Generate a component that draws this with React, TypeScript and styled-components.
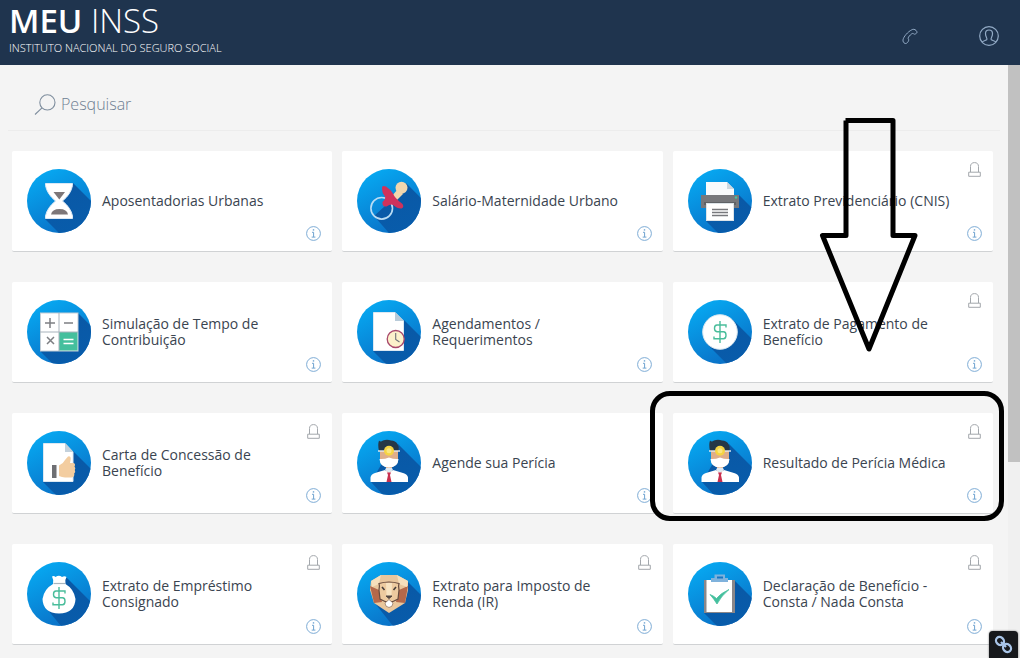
import React from "react";
import styled, { createGlobalStyle } from "styled-components";

const GlobalStyle = createGlobalStyle`
  *, *::before, *::after { box-sizing: border-box; }
  body {
    margin: 0;
    background: #f4f4f4;
    font-family: "Open Sans", "Liberation Sans", sans-serif;
    color: #3a4450;
  }
`;

const Page = styled.div`
  display: flex;
  flex-direction: column;
  min-height: 100vh;
`;

const Header = styled.header`
  display: flex;
  justify-content: space-between;
  align-items: flex-start;
  height: 65px;
  padding: 0 20px 0 9px;
  background: #1f344e;
  color: #ffffff;
`;

const Brand = styled.a`
  color: inherit;
  text-decoration: none;
`;

const BrandName = styled.span`
  display: block;
  font-size: 33px;
  line-height: 42px;
  font-weight: 300;

  strong { font-weight: 600; }
`;

const BrandTagline = styled.span`
  display: block;
  font-size: 11px;
  line-height: 12px;
  font-weight: 300;
`;

const HeaderActions = styled.nav`
  display: flex;
  gap: 57px;
  padding-top: 26px;
`;

const IconButton = styled.button`
  display: flex;
  justify-content: center;
  align-items: center;
  padding: 0;
  border: 0;
  background: none;
  cursor: pointer;
`;

const HeaderButton = styled(IconButton)`
  width: 22px;
  height: 20px;
  color: #93abc6;
`;

const Body = styled.div`
  display: flex;
  flex: 1;
`;

const Main = styled.main`
  flex: 1;
  min-width: 0;
  padding: 0 8px 13px;
`;

const ScrollTrack = styled.div`
  width: 12px;
  background: #f0f0f0;
`;

const ScrollThumb = styled.div`
  height: 67%;
  background: #c1c1c1;
`;

const SearchBar = styled.label`
  display: flex;
  align-items: center;
  gap: 5px;
  height: 66px;
  padding: 13px 26px 0;
  border-bottom: 1px solid #ececec;
  color: #7f8e9e;
`;

const SearchInput = styled.input`
  flex: 1;
  min-width: 0;
  padding: 0;
  border: 0;
  outline: 0;
  background: none;
  font-family: inherit;
  font-size: 16px;
  line-height: 24px;
  font-weight: 300;
  color: #3a4450;

  &::placeholder { color: #6f8093; opacity: 1; }
`;

const CardGrid = styled.div`
  display: grid;
  grid-template-columns: repeat(3, 1fr);
  gap: 30px 10px;
  padding: 20px 7px 0 4px;
`;

const Card = styled.article`
  position: relative;
  display: flex;
  align-items: center;
  height: 101px;
  padding-left: 15px;
  background: #ffffff;
  border-bottom: 1px solid #d0d2d4;
  border-radius: 2px;
`;

const CardLink = styled.a`
  display: flex;
  flex: 1;
  align-items: center;
  gap: 11px;
  color: inherit;
  text-decoration: none;
`;

const CardTitle = styled.span`
  flex: 1;
  padding-right: 12px;
  font-size: 14px;
  line-height: 16px;
`;

const CardSide = styled.div`
  display: flex;
  flex-direction: column;
  align-items: center;
  align-self: stretch;
  width: 15px;
  margin-right: 11px;
  padding: 11px 0 10px;
`;

const InfoButton = styled(IconButton)`
  margin-top: auto;
  color: #6fa3d0;
`;

const Highlight = styled.div`
  position: absolute;
  z-index: 2;
  top: -22px;
  right: -11px;
  bottom: -8px;
  left: -23px;
  border: 5px solid #000000;
  border-radius: 20px;
  pointer-events: none;
`;

const Arrow = styled.svg`
  position: absolute;
  z-index: 2;
  top: -296px;
  right: 75px;
  pointer-events: none;
`;

const LinkBadge = styled(IconButton)`
  position: fixed;
  z-index: 3;
  right: 2px;
  bottom: 0;
  width: 29px;
  height: 27px;
  border-radius: 4px 4px 0 0;
  background: #17191c;
  box-shadow: 0 0 2px #666666;
`;

const PhoneIcon = () => (
  <svg width="16" height="17" viewBox="0 0 16 17" fill="none" stroke="currentColor" strokeLinejoin="round">
    <path d="M9.800 1.800C11 1 12.700 1.100 14 2.400C15 3.400 15.300 4.500 14.600 5.100L13.300 6C12.600 6.400 11.900 6.200 11.400 5.600C10.700 5.100 9.800 5.600 8.300 7C6.900 8.400 5.900 9.800 6.200 10.600C6.900 11.500 6.900 12.500 6.100 13.700C5.300 15 4 15.900 2.900 15.400C1.500 14.800 .8 13.300 1 11.900C1.500 8.700 5.900 3.700 9.800 1.800Z" />
  </svg>
);

const UserIcon = () => (
  <svg width="20" height="20" viewBox="0 0 20 20" fill="none" stroke="currentColor" strokeWidth="1.2">
    <circle cx="10" cy="10" r="9.300" />
    <path d="M3 16.200C4 14.800 6.800 14.500 7.700 13.800C8.400 13.100 7.900 12.200 7.300 11C6.800 10 6.500 8.700 6.500 7.500C6.500 5.200 7.900 4 10 4S13.500 5.200 13.500 7.500C13.500 8.700 13.200 10 12.700 11C12.100 12.200 11.600 13.100 12.300 13.800C13.200 14.500 16 14.800 17 16.200" />
  </svg>
);

const SearchIcon = () => (
  <svg width="22" height="22" viewBox="0 0 22 22" fill="none" stroke="currentColor" strokeWidth="1.1">
    <circle cx="13.400" cy="9.400" r="7.600" />
    <path d="M8 14.800L1 21.500" />
  </svg>
);

const LockIcon = () => (
  <svg width="13" height="15" viewBox="0 0 13 15" fill="none" stroke="#a3a7ac" role="img" aria-label="Requer login">
    <path d="M2.500 10V4.500C2.500 2 4 .6 6.500 .6S10.500 2 10.500 4.500V10" />
    <path d="M.7 10.200H12.300V14.300H.7Z" />
  </svg>
);

const InfoIcon = () => (
  <svg width="15" height="15" viewBox="0 0 15 15" fill="none" stroke="currentColor">
    <circle cx="7.500" cy="7.500" r="6.900" strokeWidth=".9" />
    <path d="M6 6.300H7.600V11M5.700 11.100H9.400" />
    <path d="M6.800 3.900H8.200" strokeWidth="1.400" />
  </svg>
);

const ChainIcon = () => (
  <svg width="19" height="19" viewBox="0 0 19 19" fill="none" stroke="#a9c5e8" strokeWidth="2.300">
    <ellipse cx="6" cy="6" rx="4.300" ry="3.700" transform="rotate(45 6 6)" />
    <ellipse cx="13" cy="13" rx="4.300" ry="3.700" transform="rotate(45 13 13)" />
    <path d="M7 7L12 12" />
  </svg>
);

const Dollar = ({ y = 0 }: { y?: number }) => (
  <path
    d={`M32 ${21 + y}V${43 + y}M38 ${27.5 + y}V${25 + y}H29Q26.500 ${25 + y} 26.500 ${28.300 + y}T29 ${31.800 + y}H35.500Q38 ${31.800 + y} 38 ${35.300 + y}T35.500 ${38.800 + y}H26V${36.500 + y}`}
    fill="none"
    stroke="#49bd9b"
    strokeWidth="1.400"
  />
);

const Doctor = () => (
  <>
    <path d="M29 34H35V43H29Z" fill="#dba983" />
    <path d="M13.500 51V46.500Q14 43 18 42L28 39L32 42L36 39L46 42Q50.500 43 51 46.500V51Z" fill="#ffffff" />
    <path d="M28 39L32 42L36 39L35 37H29Z" fill="#dfe9f2" />
    <path d="M30 41.500H34L33 44L34.500 51H29.500L31 44Z" fill="#c9304f" />
    <path d="M23 17H41V28Q41 36 32 36Q23 36 23 28Z" fill="#dfae8a" />
    <path d="M22 20Q20.500 14 22 9.500Q23.500 11.500 26 9.500Q30 8 34 9.500Q38.500 9.500 40.500 13Q42.500 16 41.500 20Z" fill="#263746" />
    <path d="M21 20H43" stroke="#e8edf0" strokeWidth="1.400" />
    <path d="M22.500 28Q27 28.500 32 26.500Q37 28.500 41.500 28Q41 36.500 32 36.500Q23 36.500 22.500 28Z" fill="#ffffff" />
    <circle cx="32" cy="19.700" r="5" fill="#f6d443" />
    <circle cx="32" cy="19.700" r="2.500" fill="#fae680" />
  </>
);

const artwork = {
  hourglass: {
    shadow: "M46 14L64 32V64H32L18 50Z",
    drawing: (
      <>
        <path d="M18.500 14.500H45.500V16.500Q44 25 35.500 32Q44 39 45.500 47V49.500H18.500V47Q20 39 28.500 32Q20 25 18.500 16.500Z" fill="#ffffff" stroke="#d9e8f6" />
        <path d="M26.500 23H38L32.300 30.500Z" fill="#7d7779" />
        <path d="M24 45.500Q25 40 32.500 40T41 45.500Z" fill="#7d7779" />
      </>
    ),
  },
  pacifier: {
    shadow: "M49 14L64 29V64H32L17 47L28 37Z",
    drawing: (
      <>
        <circle cx="24.700" cy="39.300" r="10.800" fill="none" stroke="#b9dcf4" strokeWidth="1.600" />
        <path d="M34 28L41 20L46 25L38 33Z" fill="#f1d6ae" />
        <circle cx="44.500" cy="18.700" r="6" fill="#f1d6ae" />
        <path d="M29 17.500Q24.500 15.500 25 20Q25 24 28 27.500Q29 30 25.500 33Q25 38 29.500 37.500Q34 34.500 36 36Q41 40 44.500 39.500Q47.500 38 45.500 35Q37.500 29 36 24.500Q33 20 29 17.500Z" fill="#cf325c" />
      </>
    ),
  },
  printer: {
    shadow: "M51 26L64 39V64H30L18 52Z",
    drawing: (
      <>
        <path d="M18 13H39L46 20V28H18Z" fill="#f8fafc" />
        <path d="M39 13L46 20H39Z" fill="#cfd8df" />
        <rect x="13" y="26" width="38" height="13" fill="#77787c" />
        <rect x="16" y="33" width="32" height="3" fill="#5f6266" />
        <circle cx="48" cy="28.500" r="1.200" fill="#47c4a2" />
        <rect x="18.500" y="34.500" width="27" height="17" fill="#ffffff" stroke="#dde4e9" />
        <path d="M24 40.500H40M24 43.500H40M24 46.500H40" stroke="#77787c" strokeWidth="1.300" />
      </>
    ),
  },
  calculator: {
    shadow: "M51 13L64 26V64H26L13 51Z",
    drawing: (
      <>
        <rect x="13.500" y="13" width="37.500" height="38" fill="#ffffff" stroke="#c4ced6" />
        <path d="M32 32H50.500V50.500H32Z" fill="#44bf9d" />
        <path d="M32 13V51M13 32H51" stroke="#a8b3bc" />
        <path d="M18 23H28M23 18V28M37 23H46M20 37L27 44M27 37L20 44" stroke="#7d7f83" strokeWidth="1.500" />
        <path d="M36.500 39.500H46.500M36.500 43.500H46.500" stroke="#ffffff" strokeWidth="1.500" />
      </>
    ),
  },
  agenda: {
    shadow: "M47 20L64 37V64H29L16 51Z",
    drawing: (
      <>
        <path d="M16.500 12.500H38L46.500 21V50.500H16.500Z" fill="#ffffff" stroke="#dce8f2" />
        <path d="M38 12V21H47Z" fill="#b9cbd9" />
        <circle cx="38.700" cy="39" r="8.500" fill="#fcf1cb" stroke="#a8476b" strokeWidth="1.300" />
        <path d="M38.700 33V39.500L42.500 42" fill="none" stroke="#6f7278" strokeWidth="1.100" />
      </>
    ),
  },
  coin: {
    shadow: "M44.500 19.500L64 39V64H39L19.500 44.500Z",
    drawing: (
      <>
        <circle cx="32" cy="32" r="17.300" fill="#ffffff" stroke="#d8e7f0" />
        <Dollar />
      </>
    ),
  },
  letter: {
    shadow: "M46 20L64 38V64H29L16 51Z",
    drawing: (
      <>
        <path d="M16.500 12.500H38L46 21V50.500H16.500Z" fill="#ffffff" stroke="#dce8f2" />
        <path d="M38 12V21H46.500Z" fill="#c3d1dc" />
        <rect x="25" y="34" width="4.500" height="13" fill="#6e6f73" />
        <path d="M32 34.500Q36 33 38 29L41 25.500Q44 24.500 43.700 28L43 32H46.500Q49 33 47.500 35.500Q49 37 47.800 39Q49 41 47.200 42.500Q48 46 44.500 46.500H38Q35 46 32 45Z" fill="#f3cda0" />
      </>
    ),
  },
  doctor: {
    shadow: "M41 13L64 36V64H26L14 51L24 34Z",
    drawing: <Doctor />,
  },
  moneybag: {
    shadow: "M39 15L64 40V64H34L20 47Z",
    drawing: (
      <>
        <path d="M26 22Q27 18 25 14.500Q27 13.500 28.500 15Q32 12.500 35 15Q37.500 13.500 39.500 15Q37.500 18 38.500 22Q47 27 48.500 37Q48 51 32 51.500Q16 51 15.500 37Q17 27 26 22Z" fill="#ffffff" />
        <path d="M26.500 21.500H38" stroke="#a9b5be" strokeWidth="1.200" />
        <Dollar y={4} />
      </>
    ),
  },
  lion: {
    shadow: "M50 19L64 33V64H36L17 40Z",
    drawing: (
      <>
        <path d="M14 19L24 13H40L51 19V28L48 41L32 51L17 41L13 28Z" fill="#e9c69c" />
        <path d="M13 24L22 28L25 40L17 41ZM51 24L42 28L39 40L48 41Z" fill="#b4684a" />
        <path d="M14 19L24 13L22 22L15 25ZM51 19L40 13L42 22L50 25Z" fill="#f6dfbc" />
        <path d="M22 21.500Q32 18.500 42 21.500Q41 24 42 28L41 37L36 39.500H28L23 37L22 28Q23 24 22 21.500Z" fill="#edca9f" stroke="#684b3f" strokeWidth="1.200" />
        <path d="M29 21H35L34.500 34H29.500Z" fill="#f8e3c1" />
        <path d="M25 25L27.500 28M39 25L36.500 28" stroke="#453d3a" strokeWidth="1.600" />
        <path d="M29 34H35L32 36.500Z" fill="#544640" stroke="#544640" />
        <path d="M28 41L32 37.500L36 41Q36 45 32 45.500Q28 45 28 41Z" fill="#ffffff" stroke="#8a6a55" strokeWidth=".7" />
      </>
    ),
  },
  clipboard: {
    shadow: "M46 18L64 36V64H29L16 51Z",
    drawing: (
      <>
        <rect x="16" y="18" width="31" height="33" fill="#8b8789" />
        <path d="M18.500 18H44V50H18.500Z" fill="#ffffff" />
        <path d="M23 20V16H26.500V12.500H37V16H40V20Z" fill="#7fb2dc" />
        <path d="M29 14.500H35V16.500H29Z" fill="#1676c4" />
        <path d="M22 32.500Q26 34 28.500 36.500Q33 31 41 27.500Q33 34 29 42Q26 37 22 32.500Z" fill="#44bf9d" stroke="#44bf9d" strokeWidth=".8" />
      </>
    ),
  },
};

type ArtName = keyof typeof artwork;

const ServiceIcon = ({ name, id }: { name: ArtName; id: string }) => (
  <svg width="64" height="64" viewBox="0 0 64 64" aria-hidden="true">
    <defs>
      <linearGradient id={`${id}-disc`} x1="0.1" y1="0" x2="0.6" y2="1">
        <stop offset="0" stopColor="#06adf5" />
        <stop offset="1" stopColor="#0a70c6" />
      </linearGradient>
      <linearGradient id={`${id}-shade`} x1="0.400" y1="0" x2="0.700" y2="1">
        <stop offset="0" stopColor="#0a58a5" />
        <stop offset="1" stopColor="#085cab" />
      </linearGradient>
      <clipPath id={`${id}-clip`}>
        <circle cx="32" cy="32" r="32" />
      </clipPath>
    </defs>
    <circle cx="32" cy="32" r="32" fill={`url(#${id}-disc)`} />
    <path d={artwork[name].shadow} fill={`url(#${id}-shade)`} clipPath={`url(#${id}-clip)`} />
    {artwork[name].drawing}
  </svg>
);

interface Service {
  title: string;
  icon: ArtName;
  locked?: boolean;
  highlighted?: boolean;
}

const services: Service[] = [
  { title: "Aposentadorias Urbanas", icon: "hourglass" },
  { title: "Salário-Maternidade Urbano", icon: "pacifier" },
  { title: "Extrato Previdenciário (CNIS)", icon: "printer", locked: true },
  { title: "Simulação de Tempo de Contribuição", icon: "calculator" },
  { title: "Agendamentos / Requerimentos", icon: "agenda" },
  { title: "Extrato de Pagamento de Benefício", icon: "coin", locked: true },
  { title: "Carta de Concessão de Benefício", icon: "letter", locked: true },
  { title: "Agende sua Perícia", icon: "doctor" },
  { title: "Resultado de Perícia Médica", icon: "doctor", locked: true, highlighted: true },
  { title: "Extrato de Empréstimo Consignado", icon: "moneybag", locked: true },
  { title: "Extrato para Imposto de Renda (IR)", icon: "lion", locked: true },
  { title: "Declaração de Benefício - Consta / Nada Consta", icon: "clipboard", locked: true },
];

const ServiceCard = ({ service, id }: { service: Service; id: string }) => (
  <Card>
    <CardLink href="#">
      <ServiceIcon name={service.icon} id={id} />
      <CardTitle>{service.title}</CardTitle>
    </CardLink>
    <CardSide>
      {service.locked && <LockIcon />}
      <InfoButton type="button" aria-label={`Informações: ${service.title}`}>
        <InfoIcon />
      </InfoButton>
    </CardSide>
    {service.highlighted && (
      <>
        <Highlight />
        <Arrow width="99" height="237" viewBox="0 0 99 237" fill="none" stroke="#000000" strokeWidth="5" aria-hidden="true">
          <path d="M26.500 3.500H74V118.500H96L50 232L3.500 118.500H27V3.500" strokeLinejoin="round" />
        </Arrow>
      </>
    )}
  </Card>
);

export default function App() {
  return (
    <Page>
      <GlobalStyle />
      <Header>
        <Brand href="#">
          <BrandName><strong>MEU</strong> INSS</BrandName>
          <BrandTagline>INSTITUTO NACIONAL DO SEGURO SOCIAL</BrandTagline>
        </Brand>
        <HeaderActions>
          <HeaderButton type="button" aria-label="Telefone"><PhoneIcon /></HeaderButton>
          <HeaderButton type="button" aria-label="Minha conta"><UserIcon /></HeaderButton>
        </HeaderActions>
      </Header>
      <Body>
        <Main>
          <SearchBar>
            <SearchIcon />
            <SearchInput type="text" placeholder="Pesquisar" aria-label="Pesquisar" />
          </SearchBar>
          <CardGrid>
            {services.map((service, index) => (
              <ServiceCard key={service.title} service={service} id={`service-${index}`} />
            ))}
          </CardGrid>
        </Main>
        <ScrollTrack>
          <ScrollThumb />
        </ScrollTrack>
      </Body>
      <LinkBadge type="button" aria-label="Copiar link"><ChainIcon /></LinkBadge>
    </Page>
  );
}
